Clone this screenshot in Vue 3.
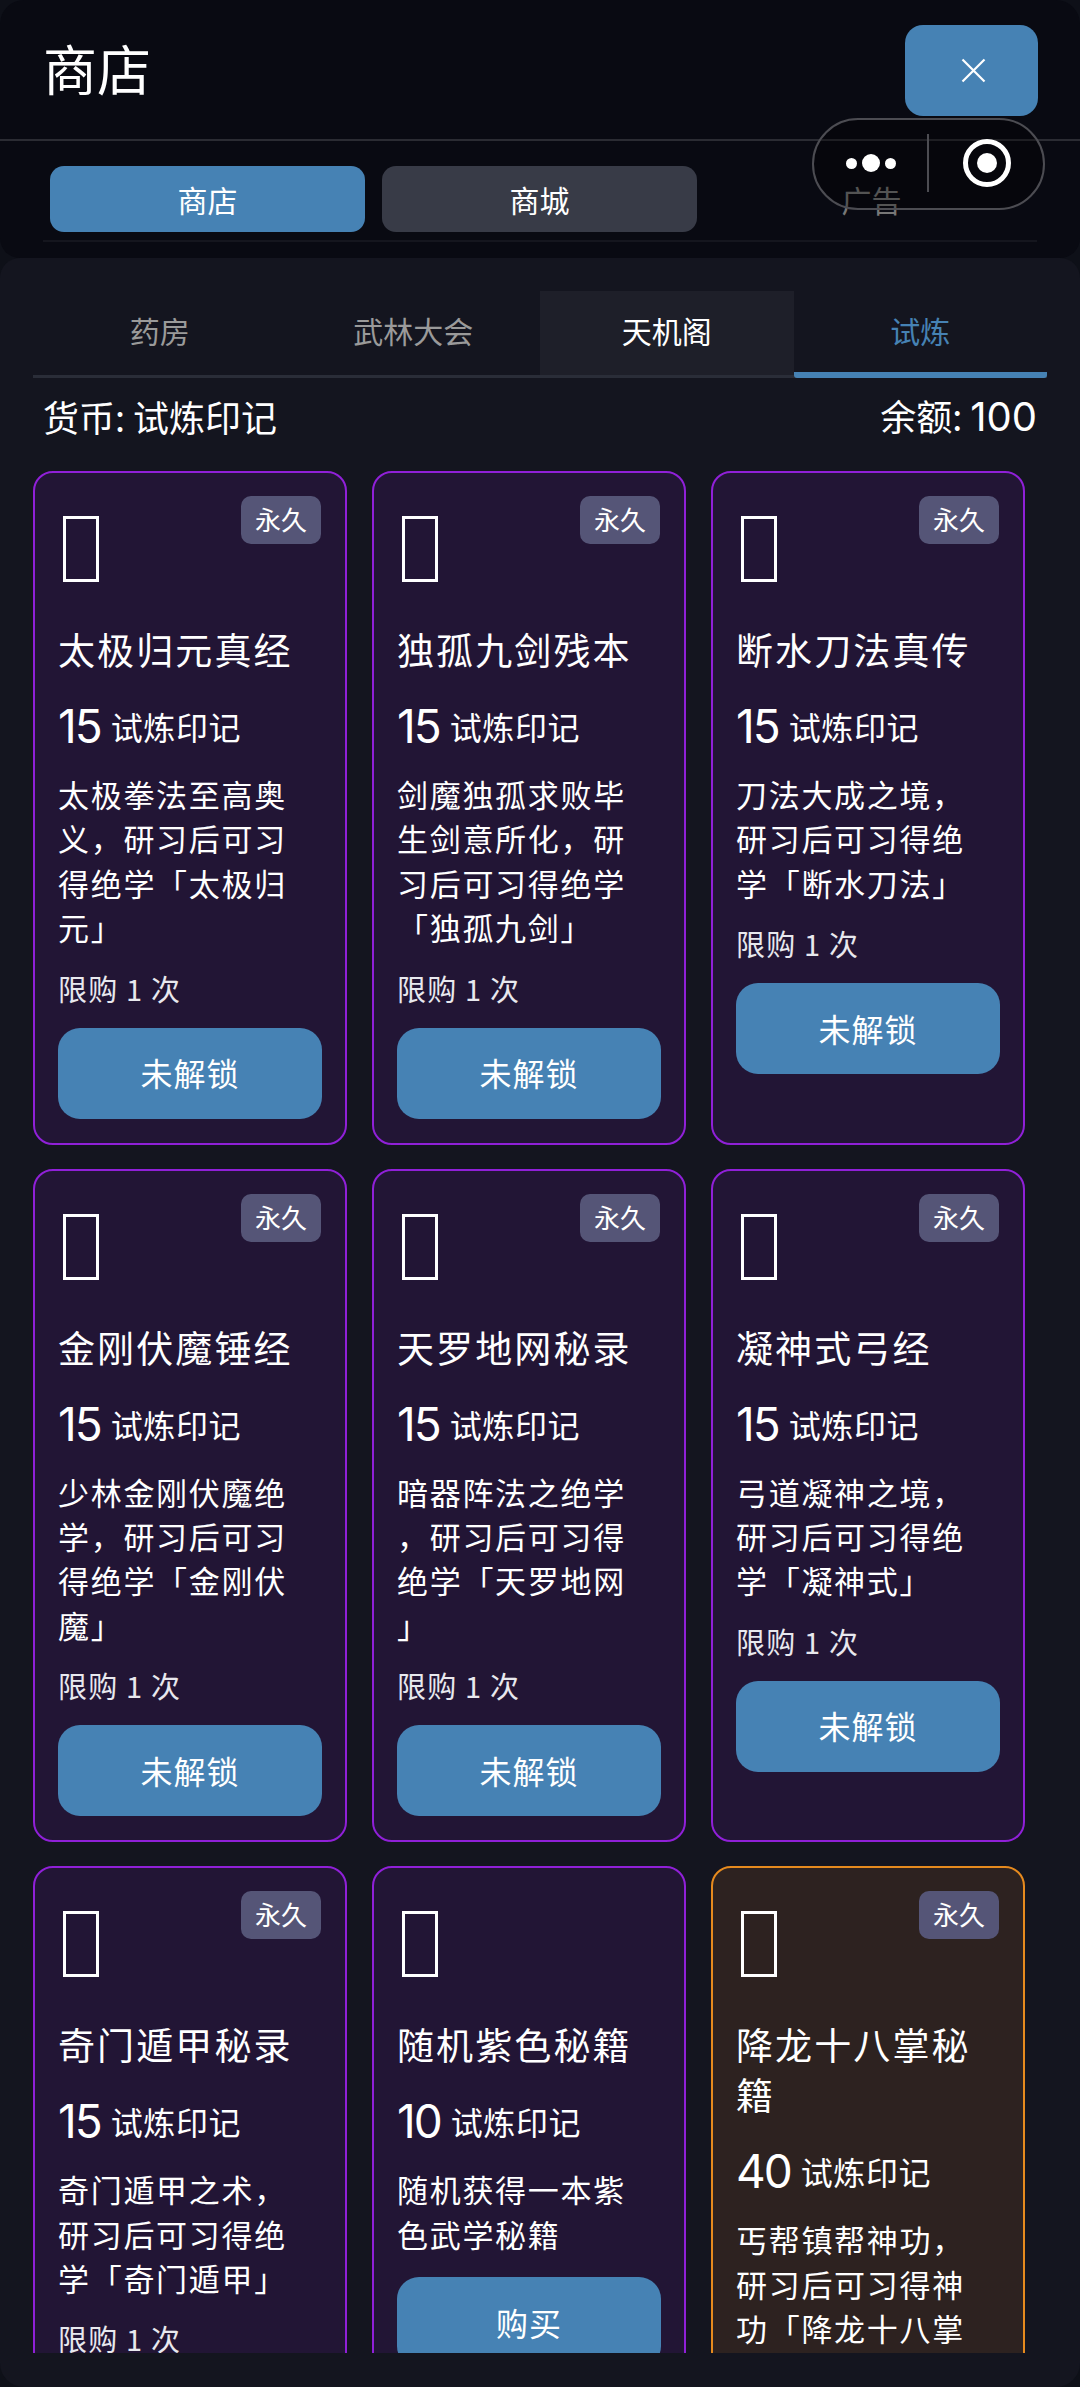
<script setup>
const topTabs = [
  { label: '商店', kind: 'on' },
  { label: '商城', kind: 'off' },
  { label: '广告', kind: 'plain' }
]
const subTabs = [
  { label: '药房', kind: '' },
  { label: '武林大会', kind: '' },
  { label: '天机阁', kind: 'hover' },
  { label: '试炼', kind: 'active' }
]
const items = [
  { name: '太极归元真经', price: 15, desc: '太极拳法至高奥义，研习后可习得绝学「太极归元」', limit: true, badge: true, btn: '未解锁' },
  { name: '独孤九剑残本', price: 15, desc: '剑魔独孤求败毕生剑意所化，研习后可习得绝学「独孤九剑」', limit: true, badge: true, btn: '未解锁' },
  { name: '断水刀法真传', price: 15, desc: '刀法大成之境，研习后可习得绝学「断水刀法」', limit: true, badge: true, btn: '未解锁' },
  { name: '金刚伏魔锤经', price: 15, desc: '少林金刚伏魔绝学，研习后可习得绝学「金刚伏魔」', limit: true, badge: true, btn: '未解锁' },
  { name: '天罗地网秘录', price: 15, desc: '暗器阵法之绝学，研习后可习得绝学「天罗地网」', limit: true, badge: true, btn: '未解锁' },
  { name: '凝神式弓经', price: 15, desc: '弓道凝神之境，研习后可习得绝学「凝神式」', limit: true, badge: true, btn: '未解锁' },
  { name: '奇门遁甲秘录', price: 15, desc: '奇门遁甲之术，研习后可习得绝学「奇门遁甲」', limit: true, badge: true, btn: '未解锁' },
  { name: '随机紫色秘籍', price: 10, desc: '随机获得一本紫色武学秘籍', limit: false, badge: false, btn: '购买' },
  { name: '降龙十八掌秘籍', price: 40, desc: '丐帮镇帮神功，研习后可习得神功「降龙十八掌」', limit: true, badge: true, btn: '未解锁', gold: true }
]
</script>

<template>
  <div class="page">
    <header class="head">
      <h1 class="title">商店</h1>
      <button class="close" aria-label="关闭">
        <svg width="25" height="25" viewBox="0 0 25 25"><path d="M1.5 1.5 L23.5 23.5 M23.5 1.5 L1.5 23.5" stroke="#fff" stroke-width="2.2" fill="none"/></svg>
      </button>
    </header>
    <div class="topnav">
      <nav class="toptabs">
        <div v-for="t in topTabs" :key="t.label" class="toptab" :class="t.kind">{{ t.label }}</div>
      </nav>
    </div>
    <main class="panel">
      <div class="subtabs">
        <div v-for="t in subTabs" :key="t.label" class="subtab" :class="t.kind">{{ t.label }}</div>
      </div>
      <div class="wallet">
        <span>货币: 试炼印记</span>
        <span>余额: <span class="num">100</span></span>
      </div>
      <div class="scroller">
        <div class="grid">
          <article v-for="it in items" :key="it.name" class="card" :class="{ gold: it.gold }">
            <span v-if="it.badge" class="badge">永久</span>
            <div class="icon"><span class="tofu"></span></div>
            <div class="name">{{ it.name }}</div>
            <div class="price"><span class="amount">{{ it.price }}</span><span class="unit">试炼印记</span></div>
            <div class="desc" :class="{ solo: !it.limit }">{{ it.desc }}</div>
            <div v-if="it.limit" class="limit">限购 1 次</div>
            <button class="buy">{{ it.btn }}</button>
          </article>
        </div>
      </div>
    </main>
    <div class="capsule">
      <div class="dots"><i class="s"></i><i class="b"></i><i class="s"></i></div>
      <div class="sep"></div>
      <div class="target"><i></i></div>
    </div>
  </div>
</template>

<style>
html, body { margin: 0; background: #0e1018; }
</style>

<style scoped>
.page {
  position: relative;
  width: 1080px;
  height: 2387px;
  overflow: hidden;
  background: #0e1018;
  color: #fff;
  font-family: "Noto Sans CJK SC", "Noto Sans", sans-serif;
  display: flex;
  flex-direction: column;
  text-spacing-trim: space-all;
}
.head {
  height: 141px;
  box-sizing: border-box;
  background: #090a12;
  border-bottom: 2px solid #2b2c33;
  border-radius: 24px 24px 0 0;
  display: flex;
  align-items: flex-start;
  justify-content: space-between;
  padding: 25px 42px 0 43px;
  flex: none;
}
.title {
  margin: 12px 0 0;
  font-size: 54px;
  line-height: 62px;
  font-weight: 400;
}
.close {
  width: 133px;
  height: 91px;
  border: 0;
  border-radius: 18px;
  background: #4682b4;
  display: flex;
  align-items: center;
  justify-content: center;
  padding: 0 0 0 3px;
}
.topnav {
  flex: none;
  height: 117px;
  background: #090a12;
  border-radius: 0 0 20px 20px;
  padding: 0 43px;
}
.toptabs {
  padding: 25px 7px 9px;
  height: 101px;
  box-sizing: border-box;
  display: flex;
  gap: 17px;
  border-bottom: 2px solid #15161e;
}
.toptab {
  width: 315px;
  height: 66px;
  flex: none;
  border-radius: 14px;
  font-size: 30px;
  line-height: 66px;
  text-align: center;
}
.toptab.on { background: #4682b4; }
.toptab.off { background: #383b47; }
.toptab.plain { color: #777; }
.panel {
  flex: 1;
  background: #14151f;
  border-radius: 20px 20px 24px 24px;
  padding: 33px 33px 34px;
  display: flex;
  flex-direction: column;
  min-height: 0;
}
.subtabs {
  flex: none;
  display: grid;
  grid-template-columns: repeat(4, 1fr);
  height: 84px;
  border-bottom: 3px solid #2a2d38;
}
.subtab {
  font-size: 30px;
  line-height: 78px;
  text-align: center;
  color: #9a9a9a;
}
.subtab.hover { background: #1e1f29; color: #fff; }
.subtab.active { color: #4682b4; border-bottom: 6px solid #4682b4; margin-bottom: -3px; border-radius: 0 0 3px 3px; }
.wallet {
  flex: none;
  display: flex;
  justify-content: space-between;
  padding: 0 10px 18px;
  height: 93px;
  box-sizing: border-box;
  align-items: center;
  font-size: 36px;
  line-height: 48px;
}
.num { font-family: Inter, sans-serif; font-size: 40px; }
.scroller {
  flex: 1;
  min-height: 0;
  overflow: hidden;
}
.grid {
  display: grid;
  grid-template-columns: repeat(3, 314px);
  column-gap: 25px;
  row-gap: 24px;
}
.card {
  position: relative;
  box-sizing: border-box;
  border: 2px solid #9020d8;
  border-radius: 20px;
  background: #221535;
  padding: 23px 23px 24px;
  display: flex;
  flex-direction: column;
  align-items: stretch;
}
.card.gold { background: #2d2220; border-color: #e68a1e; }
.badge {
  position: absolute;
  top: 23px;
  right: 24px;
  width: 80px;
  height: 48px;
  line-height: 46px;
  text-align: center;
  border-radius: 10px;
  background: #555577;
  font-size: 26px;
}
.icon {
  height: 104px;
  padding-top: 20px;
  box-sizing: border-box;
  margin-bottom: 24px;
  padding-left: 5px;
}
.tofu {
  display: block;
  width: 36px;
  height: 66px;
  box-sizing: border-box;
  border: 3px solid #fff;
}
.name {
  font-size: 37px;
  line-height: 50px;
  letter-spacing: 2.1px;
  margin-bottom: 28px;
}
.price {
  display: flex;
  align-items: center;
  height: 48px;
  margin-bottom: 22px;
}
.amount {
  font-family: Inter, sans-serif;
  font-size: 46px;
  line-height: 48px;
  letter-spacing: -2px;
  margin-right: 10px;
}
.unit { font-size: 32px; letter-spacing: 0.6px; }
.desc {
  font-size: 31px;
  line-height: 44.4px;
  letter-spacing: 1.7px;
  padding-right: 10px;
  line-break: anywhere;
  margin-bottom: 16px;
}
.desc.solo { margin-bottom: 21px; }
.limit {
  font-size: 29px;
  line-height: 44px;
  letter-spacing: 1.2px;
  color: #e8e8ee;
  margin-bottom: 18px;
}
.buy {
  width: 100%;
  height: 91px;
  border: 0;
  border-radius: 22px;
  background: #4682b4;
  color: #fff;
  font-family: inherit;
  font-size: 32px;
  letter-spacing: 1px;
  padding: 0 0 2px;
  flex: none;
}
.capsule {
  position: absolute;
  left: 812px;
  top: 118px;
  width: 233px;
  height: 92px;
  box-sizing: border-box;
  border: 2.5px solid #4c4c52;
  border-radius: 46px;
  background: rgba(0,0,0,0.3);
  display: flex;
  align-items: center;
}
.dots {
  width: 113px;
  display: flex;
  justify-content: center;
  align-items: center;
  gap: 5px;
  margin-top: -2px;
}
.dots i { display: block; background: #fff; border-radius: 50%; }
.dots .s { width: 11px; height: 11px; }
.dots .b { width: 18px; height: 18px; }
.sep { width: 2px; height: 58px; background: #4c4c52; margin-top: -2px; }
.target {
  margin-left: 34px;
  width: 48px;
  height: 48px;
  box-sizing: border-box;
  border: 5px solid #fff;
  border-radius: 50%;
  display: flex;
  align-items: center;
  justify-content: center;
  margin-top: -2px;
}
.target i { display: block; width: 20px; height: 20px; background: #fff; border-radius: 50%; }
</style>
